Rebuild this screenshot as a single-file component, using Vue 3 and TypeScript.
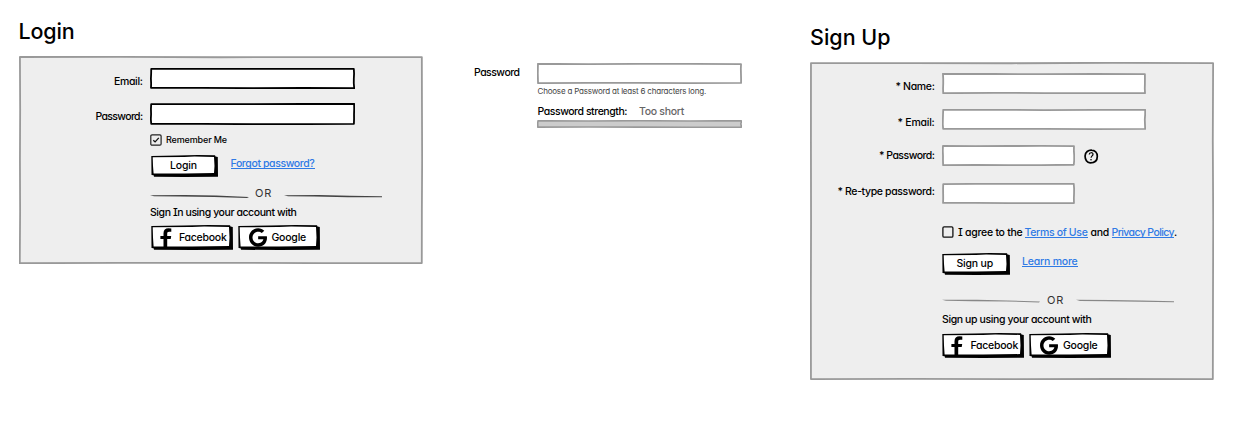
<script setup lang="ts">
import { h, type Directive, type FunctionalComponent } from 'vue'

interface BoxProps { w: number; h: number; stroke?: string; fill?: string; thick?: number; seed?: number }

const edge = (seed: number) => {
  let s = seed * 97 + 13
  return (amount: number) => {
    s = (s * 1103 + 337) % 7919
    return (s / 7919 - 0.5) * 2 * amount
  }
}

// Hand-drawn rectangle: every side is a slightly wandering line.
const SketchBox: FunctionalComponent<BoxProps> = (p) => {
  const t = p.thick ?? 1.8
  const rnd = edge(p.seed ?? 1)
  const a = t / 2 + 0.1
  const r = p.w - a
  const b = p.h - a
  const pts: string[] = []
  const side = (x1: number, y1: number, x2: number, y2: number) => {
    for (let i = 0; i < 4; i++) {
      const k = i / 4
      pts.push(`${(x1 + (x2 - x1) * k + rnd(0.25)).toFixed(2)} ${(y1 + (y2 - y1) * k + rnd(0.25)).toFixed(2)}`)
    }
  }
  side(a, a, r, a)
  side(r, a, r, b)
  side(r, b, a, b)
  side(a, b, a, a)
  return h('svg', { width: p.w, height: p.h, viewBox: `0 0 ${p.w} ${p.h}` }, [
    h('path', {
      d: `M${pts.join('L')}Z`, fill: p.fill ?? '#fff', stroke: p.stroke ?? '#999',
      'stroke-width': t, 'stroke-linejoin': 'round',
    }),
  ])
}
SketchBox.props = ['w', 'h', 'stroke', 'fill', 'thick', 'seed']

// Raised button face with a thick right and bottom edge.
const ButtonFace: FunctionalComponent<{ w: number; h: number }> = ({ w, h: t }) =>
  h('svg', { width: w, height: t, viewBox: `0 0 ${w} ${t}` }, [
    h('path', { d: `M0.3 .9L${w * 0.4} .5L${w * 0.7} 0L${w - 3} .3L${w - 2.5} 1.6L${w - 0.2} 2L${w} ${t - 0.3}L${w * 0.5} ${t}L3 ${t - 0.2}L2.6 ${t - 1.7}L.5 ${t - 2}Z`, fill: '#000' }),
    h('path', { d: `M1.7 2.2L${w * 0.5} 2.1L${w * 0.65} 1.6L${w - 4} 1.9L${w - 3.5} ${t * 0.5}L${w - 4} ${t - 3.9}L${w * 0.5} ${t - 3.6}L2.6 ${t - 3.5}L2 ${t * 0.5}Z`, fill: '#fff' }),
  ])
ButtonFace.props = ['w', 'h']

// Spreads the letters of a label over a fixed measure.
const vFit: Directive<HTMLElement, number> = {
  mounted(el, { value }) {
    const count = (el.textContent ?? '').trim().length
    const natural = el.getBoundingClientRect().width
    el.style.letterSpacing = `${(value - natural) / count}px`
  },
}

const fields = [
  { label: '* Name:', fit: 39, width: 204, cls: 'f-name', seed: 3 },
  { label: '* Email:', fit: 37, width: 204, cls: 'f-email', seed: 4 },
  { label: '* Password:', fit: 55.5, width: 133, cls: 'f-pass', seed: 5, help: true },
  { label: '* Re-type password:', fit: 97, width: 133, cls: 'f-retype', seed: 6 },
]
</script>

<template>
  <main class="page">
    <section class="login">
      <h1><span v-fit="56">Login</span></h1>
      <div class="panel">
        <SketchBox class="bg" :w="404" :h="208" fill="#eee" :seed="1" />
        <div class="row f-first">
          <label><span v-fit="28.5">Email:</span></label>
          <SketchBox :w="205" :h="21" stroke="#000" :seed="8" />
        </div>
        <div class="row f-second">
          <label><span v-fit="47">Password:</span></label>
          <SketchBox :w="205" :h="22" stroke="#000" :seed="2" />
        </div>
        <div class="inset check small">
          <svg class="box" width="12" height="12" viewBox="0 0 12 12"><rect x=".8" y=".8" width="10.3" height="10.3" rx="1.2" fill="none" stroke="#222" stroke-width="1.2" /><path d="M3.3 6.2l1.8 1.7 3.7-4" fill="none" stroke="#111" stroke-width="1.3" /></svg>
          <span v-fit="61">Remember Me</span>
        </div>
        <div class="inset action">
          <button><ButtonFace class="bg" :w="67" :h="22" /><span v-fit="27">Login</span></button>
          <a><span v-fit="84">Forgot password?</span></a>
        </div>
        <div class="inset divider dark">
          <svg width="99" height="4"><path d="M0 1.2L35 .9 66 1.6 99 3 97 4 64 3 30 2.6 4 2.3z" /></svg>
          <span v-fit="17">OR</span>
          <svg width="99" height="4"><path d="M0 1.2L35 1.1 66 1.7 98 2.2 98 3.2 64 3.2 30 2.5 4 2.3z" /></svg>
        </div>
        <p class="inset"><span v-fit="146.5">Sign In using your account with</span></p>
        <div class="inset social">
          <button class="fb"><ButtonFace class="bg" :w="82" :h="25" /><svg class="ico" width="12" height="20" viewBox="0 0 12 20"><path d="M11.3.4v3.3H9.1c-1.6 0-1.9.8-1.9 2.1v2.1h4l-.5 3.2H7.2V20H3.5v-8.9H.4V7.9h3.1V5.3C3.5 1.9 5.4.3 8.4.3z" /></svg><span v-fit="47.5">Facebook</span></button>
          <button class="gg"><ButtonFace class="bg" :w="82" :h="25" /><svg class="ico" width="18" height="19" viewBox="0 0 488 512" preserveAspectRatio="none"><path d="M488 261.8C488 403.3 391.1 504 248 504 110.8 504 0 393.2 0 256S110.8 8 248 8c66.8 0 123 24.5 166.3 64.9l-67.5 64.9C258.5 52.6 94.3 116.6 94.3 256c0 86.5 69.1 156.6 153.7 156.6 98.2 0 135-70.4 140.8-106.9H248v-85.3h236.1c2.3 12.7 3.9 24.9 3.9 41.4z" /></svg><span v-fit="34.5">Google</span></button>
        </div>
      </div>
    </section>

    <section class="strength">
      <label><span v-fit="45.5">Password</span></label>
      <div class="meter">
        <SketchBox :w="205" :h="21" :seed="7" />
        <p class="hint"><span v-fit="168.5">Choose a Password at least 6 characters long.</span></p>
        <p class="score"><span v-fit="89.5">Password strength:</span><span v-fit="45" class="muted">Too short</span></p>
        <SketchBox :w="205" :h="8" fill="#ccc" :thick="1.6" :seed="0" />
      </div>
    </section>

    <section class="signup">
      <h1><span v-fit="80.5">Sign Up</span></h1>
      <div class="panel">
        <SketchBox class="bg" :w="404" :h="318" fill="#eee" :seed="9" />
        <div v-for="f in fields" :key="f.label" class="row" :class="f.cls">
          <label><span v-fit="f.fit">{{ f.label }}</span></label>
          <SketchBox :w="f.width" :h="21" :seed="f.seed" />
          <svg v-if="f.help" class="help" width="15" height="15" viewBox="0 0 15 15"><path d="M7.8 1.1C4.2.8 1.3 3.2 1.1 6.8.9 10.8 3 13.9 6.3 13.8c4.3 0 7-2.5 7-6.4 0-3.7-2.4-6.2-6-6.3" fill="none" stroke="#000" stroke-width="1.7" /><path d="M5.2 5.5C5.4 3.2 9.3 3.1 9 5.4 8.8 6.9 7.1 7 7.1 8.8" fill="none" stroke="#000" stroke-width="1.2" /><circle cx="7" cy="10.7" r=".8" /></svg>
        </div>
        <div class="inset check agree">
          <svg class="box" width="12" height="12" viewBox="0 0 12 12"><rect x=".9" y=".9" width="10" height="10.2" rx="1.2" fill="none" stroke="#111" stroke-width="1.3" /></svg>
          <span v-fit="64.5">I agree to the</span>
          <a class="terms"><span v-fit="63">Terms of Use</span></a>
          <span v-fit="18.5" class="and">and</span>
          <a class="privacy"><span v-fit="62.5">Privacy Policy</span></a><span class="stop">.</span>
        </div>
        <div class="inset action up">
          <button><ButtonFace class="bg" :w="68" :h="22" /><span v-fit="36.5">Sign up</span></button>
          <a><span v-fit="55.5">Learn more</span></a>
        </div>
        <div class="inset divider">
          <svg width="99" height="4"><path d="M0 .8L35 .7 66 1.4 98 2.4 97 3.4 64 2.5 30 2.2 4 1.8z" /></svg>
          <span v-fit="17">OR</span>
          <svg width="99" height="4"><path d="M0 .8L35 .9 66 1.5 98 2.3 98 3.3 64 2.7 30 2.2 4 1.9z" /></svg>
        </div>
        <p class="inset"><span v-fit="149.5">Sign up using your account with</span></p>
        <div class="inset social">
          <button class="fb"><ButtonFace class="bg" :w="82" :h="25" /><svg class="ico" width="12" height="20" viewBox="0 0 12 20"><path d="M11.3.4v3.3H9.1c-1.6 0-1.9.8-1.9 2.1v2.1h4l-.5 3.2H7.2V20H3.5v-8.9H.4V7.9h3.1V5.3C3.5 1.9 5.4.3 8.4.3z" /></svg><span v-fit="47.5">Facebook</span></button>
          <button class="gg"><ButtonFace class="bg" :w="82" :h="25" /><svg class="ico" width="18" height="19" viewBox="0 0 488 512" preserveAspectRatio="none"><path d="M488 261.8C488 403.3 391.1 504 248 504 110.8 504 0 393.2 0 256S110.8 8 248 8c66.8 0 123 24.5 166.3 64.9l-67.5 64.9C258.5 52.6 94.3 116.6 94.3 256c0 86.5 69.1 156.6 153.7 156.6 98.2 0 135-70.4 140.8-106.9H248v-85.3h236.1c2.3 12.7 3.9 24.9 3.9 41.4z" /></svg><span v-fit="34.5">Google</span></button>
        </div>
      </div>
    </section>
  </main>
</template>

<style>
body { margin: 0; background: #fff; }
</style>

<style scoped>
.page { display: flex; align-items: flex-start; box-sizing: border-box; width: 1247px; height: 430px; padding-left: 18px; overflow: hidden; color: #000; background: #fff; font: 500 10.5px/14px Inter, "Open Sans", sans-serif; font-feature-settings: "cv11", "cv08"; }
svg { display: block; flex: none; }
span { position: relative; top: 1px; white-space: nowrap; }
p { margin: 0; }
h1 { margin: 0; font: 500 21.5px/28px Inter, "Open Sans", sans-serif; height: 39px; }
h1 span, .small span, .hint span { top: 0; }
.login { flex: none; width: 405px; padding-top: 17px; }
.login h1 { padding-left: .5px; }
.panel { position: relative; display: flex; flex-direction: column; width: 405px; box-sizing: border-box; }
.login .panel { height: 209px; padding-top: 12px; }
.bg { position: absolute; left: 0; top: 0; }
.login .panel > .bg { left: 1px; }
.row { position: relative; display: flex; gap: 8px; }
.row label { display: flex; justify-content: flex-end; box-sizing: border-box; width: 124.5px; padding-top: 6px; }
.login .row { gap: 7.5px; }
.f-second { margin-top: 14px; }
.inset { position: relative; display: flex; margin-left: 132px; }
.check { align-items: flex-start; height: 12px; gap: 4px; }
.small { margin-top: 9px; font-size: 9px; }
.check span { margin-top: -1px; }
button { position: relative; display: flex; flex: none; padding: 0; margin: 0; border: 0; background: none; color: #000; font: inherit; font-feature-settings: inherit; }
.action { margin: 9px 0 0 132.5px; height: 22px; }
.action button { width: 67px; height: 22px; padding: 3px 0 0 19.5px; box-sizing: border-box; }
.action a { margin: 1px 0 0 13px; }
a { color: #2f7ae5; height: 13px; box-shadow: inset 0 -1px #2f7ae5; }
.divider { margin-top: 9px; height: 14px; color: #333; gap: 6px; font-size: 11px; font-weight: 400; }
.divider svg { margin-top: 8px; fill: #888; }
.dark svg { fill: #444; }
.divider span { top: 0; margin-right: 6px; }
.login p.inset { margin-top: 5px; }
.social { margin: 6px 0 0 132.5px; gap: 5px; height: 25px; }
.social button { width: 82px; height: 25px; }
.social span { margin-top: 5px; }
.ico { position: relative; }
.fb .ico { margin: 3px 7.5px 0 9px; }
.gg .ico { margin: 3px 5px 0 11px; }
.strength { display: flex; flex: none; padding-left: 51px; width: 268px; padding-top: 63px; }
.strength label { width: 63px; padding-top: 2px; }
.meter { width: 205px; }
.hint { height: 20px; padding-left: .5px; font-size: 8px; font-weight: 400; color: #444; }
.score { display: flex; height: 16px; padding-left: .5px; gap: 12px; }
.muted { color: #666; }
.signup { flex: none; width: 405px; padding-top: 23px; margin-left: 68px; }
.signup .panel { height: 319px; padding-top: 11px; }
.signup .row { gap: 7.5px; }
.f-email { margin-top: 15px; }
.f-pass { margin-top: 15px; }
.f-retype { margin-top: 17px; }
.signup .f-pass label { padding-top: 3px; }
.signup .f-retype label { padding-top: 1px; }
.help { margin: 4px 0 0 1px; }
.agree { margin-top: 21px; gap: 0; }
.agree span { margin-top: 0; }
.agree .box { margin: 1px 4px 0 0; }
.agree .terms { margin-left: 2px; }
.agree .and { margin-left: 3px; }
.agree .privacy { margin-left: 2.5px; }
.up { margin-top: 16px; margin-left: 132px; }
.up button { padding-left: 14.5px; }
.signup .divider { margin-top: 18px; height: 16px; }
.signup .divider svg { margin-top: 6px; }
.signup p.inset { margin-top: 3px; }
.signup .social { margin-top: 7px; margin-left: 132px; }
</style>
